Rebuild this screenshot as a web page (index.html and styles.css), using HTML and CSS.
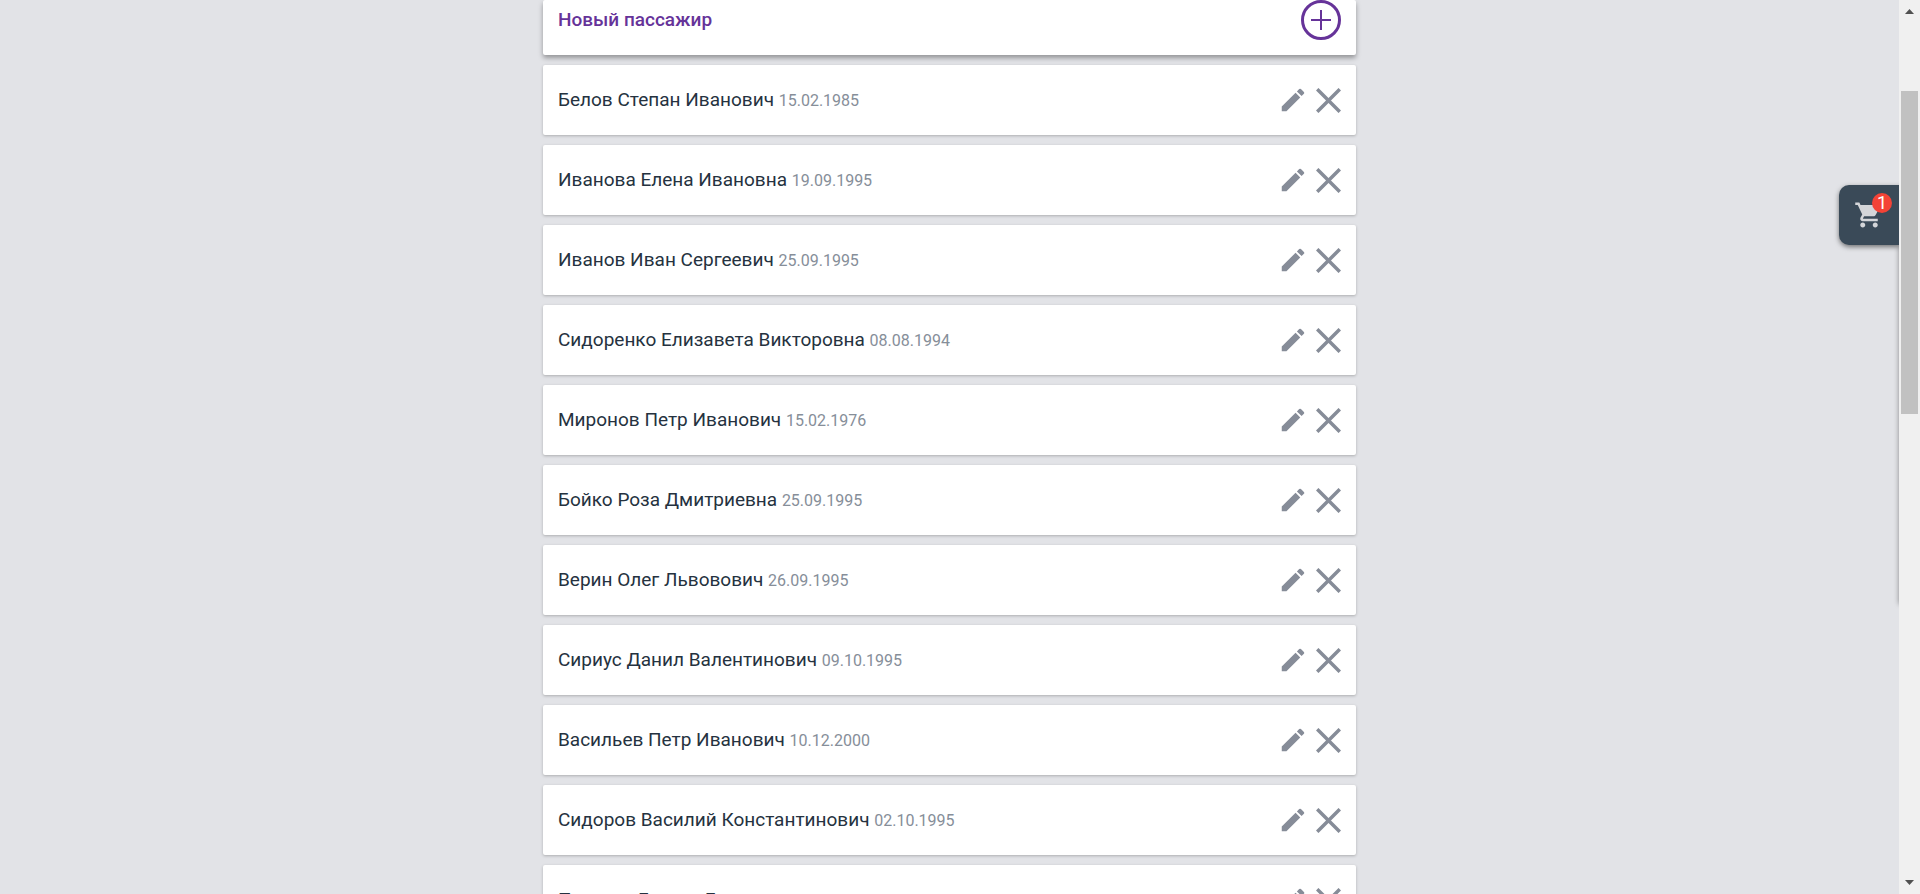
FILE: index.html
```
<!DOCTYPE html>
<html lang="ru">
<head>
<meta charset="utf-8">
<title>Пассажиры</title>
<link rel="stylesheet" href="styles.css">
</head>
<body>
<svg class="sprite" aria-hidden="true">
  <symbol id="edit" viewBox="0 0 24 24"><path d="M3 17.25V21h3.75L17.81 9.94l-3.75-3.75L3 17.25zM20.71 7.04a1 1 0 0 0 0-1.41l-2.34-2.34a1 1 0 0 0-1.41 0l-1.83 1.83 3.75 3.75 1.83-1.83z"/></symbol>
  <symbol id="close" viewBox="0 0 25 25"><path d="M1.200 1.200L23.800 23.800M23.800 1.200L1.200 23.800" fill="none" stroke="currentColor" stroke-width="3.500"/></symbol>
</svg>
<div class="page">
  <main class="content">
    <section class="new-card">
      <h2 class="new-title">Новый пассажир</h2>
      <button class="add" type="button" aria-label="Добавить пассажира">
        <svg viewBox="0 0 40 40"><circle cx="20" cy="20" r="18.500" stroke-width="3"/><path d="M20 10v20M10 20h20"/></svg>
      </button>
    </section>
    <ul class="list" id="list"></ul>
  </main>
  <aside class="drawer"></aside>
  <button class="cart" type="button" aria-label="Корзина">
    <svg class="cart-icon" viewBox="0 0 24 24"><path d="M7 18c-1.100 0-1.990.9-1.990 2S5.900 22 7 22s2-.9 2-2-.9-2-2-2zM1 2v2h2l3.600 7.590-1.350 2.450c-.16.28-.25.61-.25.96 0 1.100.9 2 2 2h12v-2H7.420c-.14 0-.25-.11-.25-.25l.03-.12.900-1.630h7.450c.75 0 1.410-.41 1.750-1.030l3.580-6.490A1 1 0 0 0 20 4H5.210l-.94-2H1zm16 16c-1.100 0-1.990.9-1.990 2s.89 2 1.990 2 2-.9 2-2-.9-2-2-2z"/></svg>
    <span class="badge">1</span>
  </button>
  <div class="scrollbar" aria-hidden="true">
    <svg class="arrow" viewBox="0 0 9 5"><path d="M0 5L4.500 0L9 5z"/></svg>
    <div class="track"><div class="thumb"></div></div>
    <svg class="arrow" viewBox="0 0 9 5"><path d="M0 0L4.500 5L9 0z"/></svg>
  </div>
</div>
<script src="script.js"></script>
</body>
</html>
```

FILE: styles.css
```
* { box-sizing: border-box; }
body {
  margin: 0;
  background: #e2e3e7;
  color: #253240;
  font-family: Roboto, "Liberation Sans", sans-serif;
}
button { border: 0; padding: 0; background: none; cursor: pointer; }
svg { display: block; }
.sprite { display: none; }
.page {
  display: flex;
  position: relative;
  height: 100vh;
  overflow: hidden;
}
.content { flex: 1; padding: 0 16px; }
.new-card, .row {
  display: flex;
  align-items: center;
  background: #fff;
  border-radius: 2px;
}
.new-card {
  max-width: 813px;
  height: 55px;
  margin: 0 auto 10px;
  padding: 0 15px 15px;
  justify-content: space-between;
  box-shadow: 0 3px 5px rgba(0, 0, 0, .35);
}
.new-title { margin: 0; color: #663399; font-size: 19px; font-weight: 500; line-height: 24px; }
.add { width: 40px; height: 40px; color: #663399; }
.add svg { fill: none; stroke: currentColor; stroke-width: 2; }
.list {
  display: flex;
  flex-direction: column;
  gap: 10px;
  max-width: 813px;
  margin: 0 auto;
  padding: 0;
  list-style: none;
}
.row {
  height: 70px;
  padding: 0 15px;
  box-shadow: 0 1px 3px rgba(0, 0, 0, .24);
}
.name { flex: 1; margin: 0; font-size: 19px; line-height: 24px; }
.date { color: #868e99; font-size: 16px; }
.actions { display: flex; align-items: center; gap: 8px; color: #868c98; }
.edit { width: 30px; height: 30px; color: inherit; }
.edit svg { width: 30px; height: 30px; fill: currentColor; }
.remove { width: 25px; height: 25px; color: inherit; }
.remove svg { width: 25px; height: 25px; }
.drawer {
  position: absolute;
  top: 185px;
  right: 0;
  width: 21px;
  height: 417px;
  box-shadow: 0 2px 5px rgba(0, 0, 0, .4);
}
.cart {
  position: absolute;
  top: 185px;
  right: 21px;
  width: 60px;
  height: 60px;
  border-radius: 10px 0 0 10px;
  background: #3a4a58;
  box-shadow: 0 2px 5px rgba(0, 0, 0, .5);
}
.cart-icon { width: 30px; height: 30px; margin: 0 auto; fill: #d4d6d9; }
.badge {
  position: absolute;
  top: 8px;
  right: 7px;
  width: 20px;
  height: 20px;
  border-radius: 50%;
  background: #f44336;
  color: #fff;
  font: 18px/20px Roboto, sans-serif;
}
.scrollbar {
  display: flex;
  flex-direction: column;
  align-items: center;
  z-index: 1;
  width: 21px;
  padding: 9px 2px;
  background: #f0f0f0;
}
.arrow { width: 9px; height: 5px; fill: #505050; }
.track { flex: 1; align-self: stretch; padding-top: 77px; }
.thumb { height: 323px; background: #c1c1c1; }
```

FILE: script.js
```
const passengers = [
  ["Белов Степан Иванович", "15.02.1985"],
  ["Иванова Елена Ивановна", "19.09.1995"],
  ["Иванов Иван Сергеевич", "25.09.1995"],
  ["Сидоренко Елизавета Викторовна", "08.08.1994"],
  ["Миронов Петр Иванович", "15.02.1976"],
  ["Бойко Роза Дмитриевна", "25.09.1995"],
  ["Верин Олег Львовович", "26.09.1995"],
  ["Сириус Данил Валентинович", "09.10.1995"],
  ["Васильев Петр Иванович", "10.12.2000"],
  ["Сидоров Василий Константинович", "02.10.1995"],
  ["Петрова Галина Борисовна", "12.04.1990"]
];
document.getElementById("list").innerHTML = passengers.map(([name, date]) => `
  <li class="row">
    <p class="name">${name} <span class="date">${date}</span></p>
    <div class="actions">
      <button class="edit" type="button" aria-label="Изменить: ${name}"><svg><use href="#edit"/></svg></button>
      <button class="remove" type="button" aria-label="Удалить: ${name}"><svg><use href="#close"/></svg></button>
    </div>
  </li>`).join("");
```
